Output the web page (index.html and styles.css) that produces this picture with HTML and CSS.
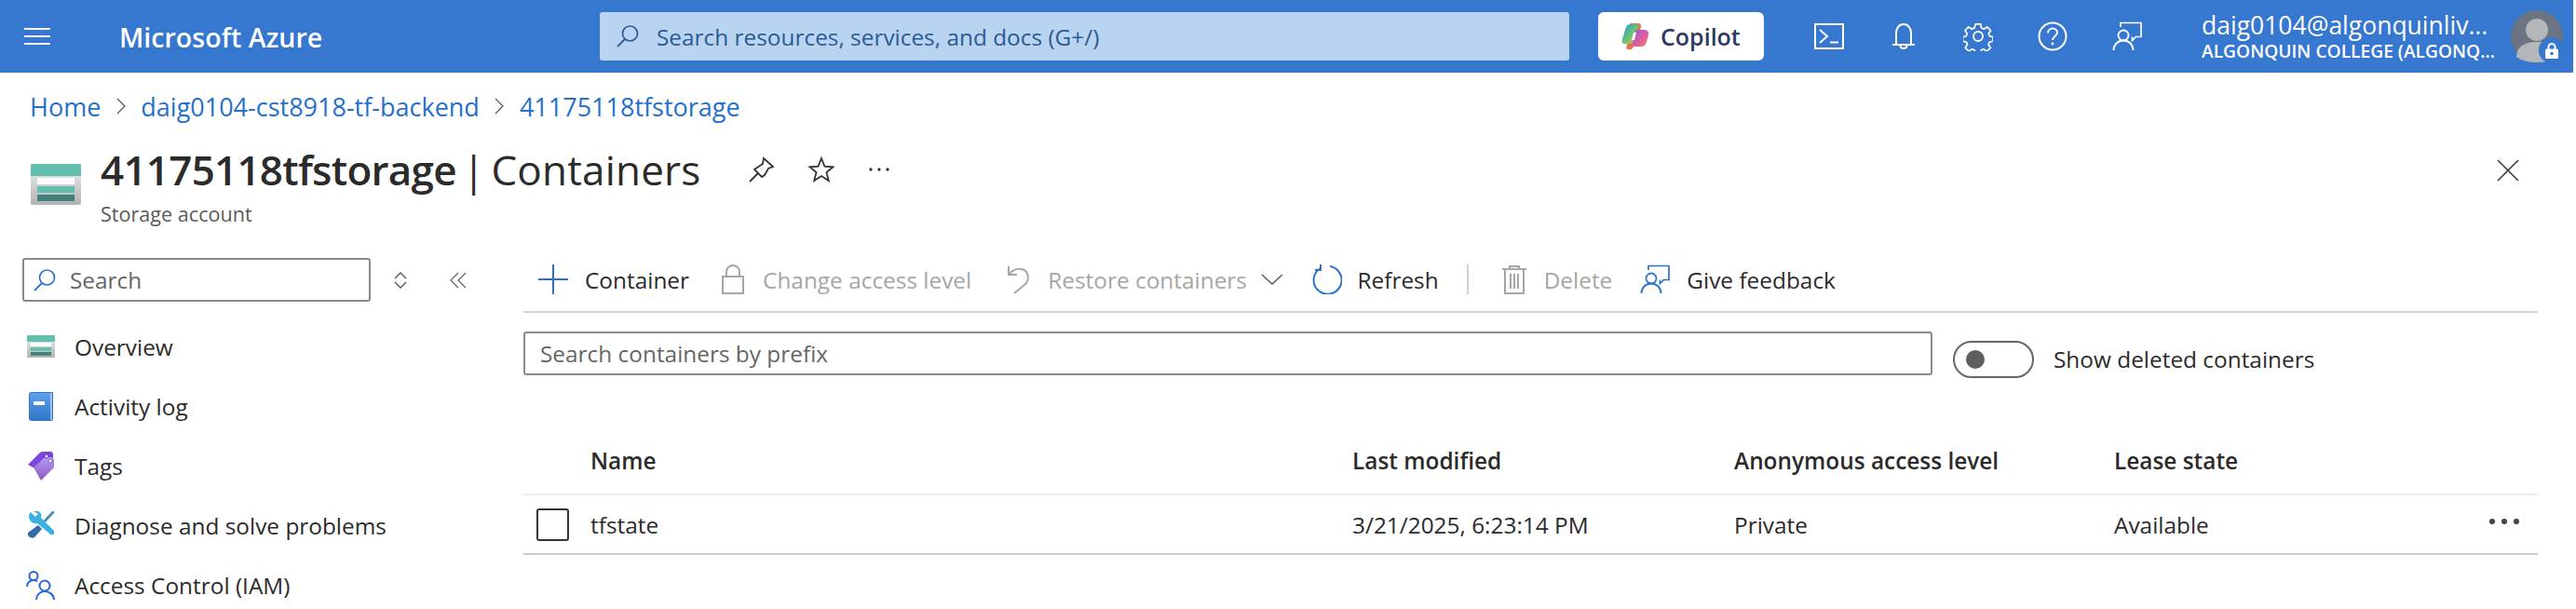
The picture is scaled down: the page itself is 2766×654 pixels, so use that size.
FILE: index.html
```html
<!DOCTYPE html>
<html lang="en">
<head>
<meta charset="utf-8">
<title>41175118tfstorage | Containers</title>
<link rel="stylesheet" href="styles.css">
</head>
<body>
<svg class="defs" width="0" height="0" aria-hidden="true">
  <defs>
    <linearGradient id="gGray" x1="0" y1="0" x2="0" y2="1"><stop offset="0" stop-color="#f1f1f1"/><stop offset="1" stop-color="#b3b3b3"/></linearGradient>
    <linearGradient id="gBook" x1="0" y1="0" x2="0" y2="1"><stop offset="0" stop-color="#5ea0ef"/><stop offset="1" stop-color="#2f77c8"/></linearGradient>
    <linearGradient id="gTag" x1="0" y1="0" x2="0" y2="1"><stop offset="0" stop-color="#b796f9"/><stop offset="1" stop-color="#8a5cb8"/></linearGradient>
    <linearGradient id="gCo1" x1="0" y1="0" x2="1" y2="1"><stop offset="0" stop-color="#1f8fe0"/><stop offset=".5" stop-color="#63c27a"/><stop offset="1" stop-color="#f2c23c"/></linearGradient>
    <linearGradient id="gCo2" x1="0" y1="0" x2="1" y2="1"><stop offset="0" stop-color="#9a56e0"/><stop offset=".6" stop-color="#e0609a"/><stop offset="1" stop-color="#f0894a"/></linearGradient>
    <symbol id="storage" viewBox="0 0 54 44">
      <rect x="0" y="0" width="54" height="44" rx="2" fill="url(#gGray)"/>
      <path d="M0 2a2 2 0 0 1 2-2h50a2 2 0 0 1 2 2v11H0z" fill="#62bfae"/>
      <rect x="7" y="15" width="40" height="7" fill="#fff"/>
      <rect x="7" y="24" width="40" height="7" fill="#62bfae"/>
      <rect x="7" y="33" width="40" height="7" fill="#44807a"/>
    </symbol>
    <symbol id="feedback" viewBox="0 0 32 32">
      <path d="M9 6V1.500h22v15h-5.500l-4 4v-4" fill="none" stroke="currentColor" stroke-width="1.700"/>
      <circle cx="12" cy="15" r="5.500" fill="none" stroke="currentColor" stroke-width="1.800"/>
      <path d="M1.500 31c0-6 4.500-10.500 10.500-10.500S22.500 25 22.500 31" fill="none" stroke="currentColor" stroke-width="1.800"/>
    </symbol>
    <symbol id="mag" viewBox="0 0 24 24">
      <circle cx="14.500" cy="9" r="8" fill="none" stroke="currentColor" stroke-width="1.700"/>
      <path d="M9 15L1 23" fill="none" stroke="currentColor" stroke-width="1.800"/>
    </symbol>
  </defs>
</svg>

<header class="topbar">
  <button class="menu-btn" aria-label="Menu">
    <svg width="28" height="18" viewBox="0 0 28 18"><path d="M0 1h28M0 9h28M0 17h28" stroke="#fff" stroke-width="2"/></svg>
  </button>
  <div class="brand">Microsoft Azure</div>
  <div class="global-search">
    <svg class="ic-mag" width="24" height="24"><use href="#mag"/></svg>
    <span>Search resources, services, and docs (G+/)</span>
  </div>
  <div class="copilot">
    <svg width="30" height="30" viewBox="0 0 30 30">
      <path d="M10 1h8c2 0 3 1 3 3l-3 17c-.5 3-2 5-5 5l-2 3H8c-3 0-3-2-2-5L9 4c.2-2 0-3 1-3z" fill="#e8724a"/>
      <path d="M9 2h8c2 0 1.500 2 1 3l-4 14c-1 3-3 4-6 4H4c-3 0-4-2-3-5l3-10c1-4 3-6 5-6z" fill="url(#gCo1)"/>
      <path d="M16 8h8c4 0 6 2 5 6l-2 7c-1 4-3 5-6 5h-8c-2 0-2-2-1-4l3-10c.4-2 0-4 1-4z" fill="url(#gCo2)"/>
      <path d="M13 11h3l-2 8h-3z" fill="#fff"/>
    </svg>
    <span>Copilot</span>
  </div>
  <div class="top-icons">
    <div class="top-icon">
      <svg width="32" height="28" viewBox="0 0 32 28" fill="none" stroke="#fff" stroke-width="2"><rect x="1" y="1" width="30" height="26"/><path d="M6 7l8 7-8 7M17 20.500h9"/></svg>
    </div>
    <div class="top-icon">
      <svg width="24" height="28" viewBox="0 0 24 28" fill="none" stroke="#fff" stroke-width="2"><path d="M4 23V11C4 5.500 7 1 12 1s8 4.500 8 10v12"/><path d="M0 23h24" /><path d="M8.500 24c0 4 7 4 7 0"/></svg>
    </div>
    <div class="top-icon">
      <svg width="32" height="32" viewBox="0 0 32 32" fill="none" stroke="#fff" stroke-width="1.900"><circle cx="16" cy="16" r="5"/><path d="M13 1.500h6l1 4.500 3 1.300 4-2.500 4 4.300-2.500 4 1.300 2.700 4 1v5l-4.300 1-1.200 3 2.500 4-4.300 4-4-2.500-2.800 1.200-1 4.500h-6l-1-4.500-2.800-1.200-4 2.500-4.200-4 2.500-4-1.200-3-4.300-1v-5l4-1 1.300-2.700-2.500-4 4-4.300 4 2.500 3-1.300z" transform="translate(1.600 1.600) scale(.9)"/></svg>
    </div>
    <div class="top-icon">
      <svg width="32" height="32" viewBox="0 0 32 32" fill="none" stroke="#fff" stroke-width="2"><circle cx="16" cy="16" r="14.500"/><path d="M11 12.500c0-3 2.200-5 5-5s5 2 5 4.500c0 4-5 4-5 8"/><circle cx="16" cy="24" r="1.400" fill="#fff" stroke="none"/></svg>
    </div>
    <div class="top-icon">
      <svg class="ic-fb-top" width="32" height="32"><use href="#feedback"/></svg>
    </div>
  </div>
  <div class="user">
    <div class="user-mail">daig0104@algonquinliv...</div>
    <div class="user-org">ALGONQUIN COLLEGE (ALGONQ...</div>
  </div>
  <div class="avatar">
    <svg width="56" height="56" viewBox="0 0 56 56"><circle cx="28" cy="28" r="28" fill="#6b7482"/><circle cx="28" cy="21" r="12" fill="#b4b6ba"/><path d="M6 50c0-10 8-16 22-16s22 6 22 16c-5 4-14 6-22 6S11 54 6 50z" fill="#b4b6ba"/></svg>
    <span class="lock-badge">
      <svg width="14" height="17" viewBox="0 0 14 17"><path d="M3.500 7V4.500a3.500 3.500 0 0 1 7 0V7" fill="none" stroke="#fff" stroke-width="2"/><rect y="6.500" width="14" height="10.500" rx="1.500" fill="#fff"/><circle cx="7" cy="11.500" r="1.800" fill="#3677cf"/></svg>
    </span>
  </div>
</header>

<nav class="breadcrumb">
  <a>Home</a>
  <svg width="10" height="18" viewBox="0 0 10 18"><path d="M1 1l8 8-8 8" fill="none" stroke="#555" stroke-width="1.200"/></svg>
  <a>daig0104-cst8918-tf-backend</a>
  <svg width="10" height="18" viewBox="0 0 10 18"><path d="M1 1l8 8-8 8" fill="none" stroke="#555" stroke-width="1.200"/></svg>
  <a>41175118tfstorage</a>
</nav>

<section class="page-head">
  <svg class="head-icon" width="54" height="44"><use href="#storage"/></svg>
  <div class="head-text">
    <h1 class="title"><strong>41175118tfstorage</strong> | Containers</h1>
    <div class="subtitle">Storage account</div>
  </div>
  <div class="head-actions">
    <svg width="28" height="28" viewBox="0 0 28 28" fill="none" stroke="#333" stroke-width="1.800"><path d="M1 27l9-9M16 2l10 9-5 2-4 7-3 2-8-8 3-2 6-4z"/></svg>
    <svg width="28" height="28" viewBox="0 0 28 28" fill="none" stroke="#333" stroke-width="1.800"><path d="M14 2l3.400 8.700 9.100.6-7 5.800 2.300 9-7.800-5-7.800 5 2.300-9-7-5.800 9.100-.6z"/></svg>
    <svg width="24" height="6" viewBox="0 0 24 6" fill="#333"><circle cx="3" cy="3" r="1.700"/><circle cx="12" cy="3" r="1.700"/><circle cx="21" cy="3" r="1.700"/></svg>
  </div>
  <svg class="close" width="24" height="24" viewBox="0 0 24 24"><path d="M1 1l22 22M23 1L1 23" stroke="#333" stroke-width="1.500"/></svg>
</section>

<div class="body">
  <aside class="sidebar">
    <div class="side-tools">
      <div class="side-search">
        <svg class="ic-blue" width="24" height="24"><use href="#mag"/></svg>
        <span>Search</span>
      </div>
      <svg class="side-updown" width="14" height="20" viewBox="0 0 14 20" fill="none" stroke="#555" stroke-width="1.300"><path d="M1 8l6-6 6 6M1 12l6 6 6-6"/></svg>
      <svg class="side-collapse" width="18" height="18" viewBox="0 0 18 18" fill="none" stroke="#666" stroke-width="1.300"><path d="M9 1L1 9l8 8M17 1L9 9l8 8"/></svg>
    </div>
    <ul class="side-menu">
      <li><span class="mi"><svg width="30" height="24" viewBox="0 0 54 44" preserveAspectRatio="none"><use href="#storage"/></svg></span>Overview</li>
      <li><span class="mi"><svg width="26" height="31" viewBox="0 0 26 31"><path d="M3 0h23v29a2 2 0 0 1-2 2H3a3 3 0 0 1-3-3V3a3 3 0 0 1 3-3z" fill="#2f77c8"/><path d="M2 1h22v28a1 1 0 0 1-1 1H3a2 2 0 0 1-2-2V3z" fill="url(#gBook)"/><path d="M24 1v29" stroke="#fff" stroke-width="1"/><rect x="5" y="10" width="12" height="4" fill="#fff"/></svg></span>Activity log</li>
      <li><span class="mi"><svg width="28" height="31" viewBox="0 0 28 31"><path d="M0 14L13 1c1-1 2-1 4-1h7c2 0 3 1 3 3v6L13 21z" fill="#7a45dc"/><path d="M6 17L18 6h7c2 0 3 1 3 3v8L14 31z" fill="url(#gTag)"/><circle cx="20" cy="5" r="2" fill="#fff" stroke="#5e3bb0"/><circle cx="24" cy="10" r="2" fill="#fff" stroke="#7a5cc0"/></svg></span>Tags</li>
      <li><span class="mi"><svg width="28" height="30" viewBox="0 0 28 30"><path d="M28 0v2L15 16l-2-2L26 0z" fill="#3f93a8"/><path d="M11 15l4 4-8 9c-1 1-3 1-5 0l-2-2c-.5-1-.5-2 0-3z" fill="#2f6ea8"/><path d="M1 5c0-2 1-3 2-4l5 5 3-3-5-3c3-1 7 0 8 3 .5 2 0 3 0 4l14 14c2 2 0 5-3 4-1 0-2-1-3-2L10 13c-3 1-9-1-9-8z" fill="#3bb1e0"/></svg></span>Diagnose and solve problems</li>
      <li><span class="mi"><svg width="32" height="31" viewBox="0 0 32 31" fill="none" stroke="#2a65d8" stroke-width="2"><circle cx="8" cy="5.500" r="4.500"/><path d="M1 17c0-4 3-7 7-7 2 0 3 .5 4 1.500"/><circle cx="20" cy="16" r="5.500"/><path d="M11 31c0-5 4-9 9-9s10 4 10 9"/></svg></span>Access Control (IAM)</li>
    </ul>
  </aside>

  <main class="content">
    <div class="toolbar">
      <div class="tool t-add">
        <svg class="ic-blue" width="32" height="32" viewBox="0 0 32 32"><path d="M16 0v32M0 16h32" stroke="currentColor" stroke-width="2"/></svg>
        <span>Container</span>
      </div>
      <div class="tool off t-lock">
        <svg width="24" height="32" viewBox="0 0 24 32" fill="none" stroke="#a6a6a6" stroke-width="2"><rect x="1" y="13" width="22" height="18"/><path d="M5 13V8a7 7 0 0 1 14 0v5"/></svg>
        <span>Change access level</span>
      </div>
      <div class="tool off t-restore">
        <svg width="26" height="32" viewBox="0 0 26 32" fill="none" stroke="#a6a6a6" stroke-width="2"><path d="M3 2v9h9"/><path d="M3 11C7 6 12 4 17 5c8 2 9 12 3 17L9 31"/></svg>
        <span>Restore containers</span>
        <svg class="chev" width="24" height="12" viewBox="0 0 24 12"><path d="M1 1l11 10L23 1" fill="none" stroke="#555" stroke-width="1.400"/></svg>
      </div>
      <div class="tool t-refresh">
        <svg class="ic-blue" width="32" height="32" viewBox="0 0 32 32" fill="none" stroke="currentColor" stroke-width="2"><path d="M19 2a15 15 0 1 1-11 2.500"/><path d="M9 0v6H3"/></svg>
        <span>Refresh</span>
      </div>
      <div class="sep"></div>
      <div class="tool off t-delete">
        <svg width="26" height="32" viewBox="0 0 26 32" fill="none" stroke="#a6a6a6" stroke-width="2"><path d="M0 5h26M8 5V2h10v3M3 5v26h20V5M9 10v16M13 10v16M17 10v16"/></svg>
        <span>Delete</span>
      </div>
      <div class="tool t-feedback">
        <svg class="ic-blue" width="32" height="32"><use href="#feedback"/></svg>
        <span>Give feedback</span>
      </div>
    </div>

    <div class="filters">
      <div class="prefix">Search containers by prefix</div>
      <div class="toggle"><span class="knob"></span></div>
      <div class="toggle-label">Show deleted containers</div>
    </div>

    <div class="grid-row head">
      <div></div><div>Name</div><div>Last modified</div><div>Anonymous access level</div><div>Lease state</div><div></div>
    </div>
    <div class="grid-row item">
      <div><span class="check"></span></div><div>tfstate</div><div>3/21/2025, 6:23:14 PM</div><div>Private</div><div>Available</div>
      <div class="more"><svg width="32" height="6" viewBox="0 0 32 6" fill="#444"><circle cx="3" cy="3" r="3"/><circle cx="16" cy="3" r="3"/><circle cx="29" cy="3" r="3"/></svg></div>
    </div>
  </main>
</div>
</body>
</html>
```
FILE: styles.css
```css
* { box-sizing: border-box; }
html, body { margin: 0; height: 100%; }
body {
  height: 654px;
  overflow: hidden;
  padding-right: 3px;
  background: #fff;
  color: #2b2b2b;
  font-family: "Open Sans", "Noto Sans", sans-serif;
  font-size: 24.400px;
}
.defs { position: absolute; }

.topbar { height: 78px; background: #3677cf; display: flex; align-items: center; color: #fff; }
.menu-btn { margin-left: 26px; padding: 0; border: 0; background: none; display: flex; }
.brand { margin-left: 74px; width: 516px; flex: none; font-size: 28.600px; font-weight: 600; }
.global-search { width: 1041px; flex: none; height: 52px; border-radius: 3px; background: #b8d4f0; display: flex; align-items: center; padding-left: 18px; gap: 19px; color: #2c5a94; }
.ic-mag { color: #2c5a94; }
.copilot { margin-left: 31px; width: 178px; flex: none; height: 52px; border-radius: 6px; background: #fff; color: #2b3a63; display: flex; align-items: center; padding-left: 25px; gap: 12px; font-size: 25px; font-weight: 600; }
.top-icons { margin-left: 30px; display: flex; flex: none; }
.top-icon { width: 80px; display: flex; justify-content: center; align-items: center; }
.ic-fb-top { color: #fff; }
.user { margin-left: 40px; width: 332px; flex: none; white-space: nowrap; }
.user-mail { font-size: 26.500px; line-height: 32px; }
.user-org { font-size: 19.200px; font-weight: 600; line-height: 24px; }
.avatar { position: relative; width: 56px; height: 56px; flex: none; }
.lock-badge { position: absolute; right: -2px; bottom: -1px; width: 28px; height: 28px; border-radius: 50%; background: #3677cf; display: flex; align-items: center; justify-content: center; }

.breadcrumb { display: flex; align-items: center; padding: 20px 0 0 32px; height: 52px; gap: 16.500px; color: #2470cc; font-size: 27px; }

.page-head { display: flex; height: 128px; padding: 19px 0 0 33px; }
.head-icon { margin-top: 27px; flex: none; }
.head-text { margin-left: 21px; }
.title { margin: 0; font-size: 44px; font-weight: 400; line-height: 66px; letter-spacing: 0.2px; word-spacing: -5px; white-space: nowrap; }
.title strong { font-weight: 600; letter-spacing: -0.75px; }
.subtitle { margin-top: 1px; font-size: 21.600px; line-height: 28px; color: #5a5a5a; }
.head-actions { margin-left: 52px; height: 66px; display: flex; align-items: center; gap: 36px; }
.close { margin-left: auto; margin-top: 22px; margin-right: 58px; }

.body { display: flex; }
.sidebar { width: 562px; flex: none; padding: 19px 0 0 24px; }
.side-tools { display: flex; align-items: center; }
.side-search { width: 374px; height: 47px; border: 2px solid #8a8a8a; border-radius: 3px; display: flex; align-items: center; padding-left: 10px; gap: 15px; color: #666; }
.ic-blue { color: #2b72cf; }
.side-updown { margin-left: 25px; }
.side-collapse { margin-left: 46px; }
.side-menu { list-style: none; margin: 16px 0 0; padding: 0; }
.side-menu li { height: 64px; display: flex; align-items: center; white-space: nowrap; }
.mi { width: 56px; flex: none; display: flex; justify-content: center; margin-left: -8px; margin-right: 8px; }

.content { width: 2163px; flex: none; }
.toolbar { height: 78px; padding-top: 8px; display: flex; align-items: center; border-bottom: 2px solid #d4d4d4; }
.tool { display: flex; align-items: center; gap: 18px; white-space: nowrap; flex: none; }
.tool.off { color: #a6a6a6; }
.t-add { margin-left: 16px; }
.t-lock { margin-left: 35px; gap: 20px; }
.t-restore { margin-left: 37px; gap: 19px; }
.chev { margin-left: -4px; }
.t-refresh { margin-left: 31px; gap: 16.500px; }
.sep { width: 2px; height: 32px; background: #d0d0d0; margin-left: 30px; }
.t-delete { margin-left: 36px; gap: 19px; }
.t-feedback { margin-left: 30px; }

.filters { display: flex; align-items: flex-start; margin-top: 20px; }
.prefix { width: 1513px; flex: none; height: 47px; border: 2px solid #8a8a8a; border-radius: 3px; display: flex; align-items: center; padding-left: 16px; color: #666; }
.toggle { margin: 10px 0 0 22px; width: 87px; height: 40px; flex: none; border: 2px solid #666; border-radius: 20px; display: flex; align-items: center; padding-left: 12px; }
.knob { width: 20px; height: 20px; border-radius: 50%; background: #605e5c; }
.toggle-label { margin: 13px 0 0 21px; white-space: nowrap; }

.grid-row { display: grid; grid-template-columns: 72px 818px 410px 408px 1fr 60px; align-items: center; white-space: nowrap; }
.head { margin-top: 56px; height: 70px; padding-bottom: 4px; border-bottom: 2px solid #ececec; font-weight: 600; }
.item { height: 64px; border-bottom: 2px solid #cdcdcd; }
.check { display: block; width: 35px; height: 35px; margin-left: 14px; border: 2px solid #333; border-radius: 3px; }
.more { display: flex; align-items: center; margin: 0 0 6px 8px; }
```
